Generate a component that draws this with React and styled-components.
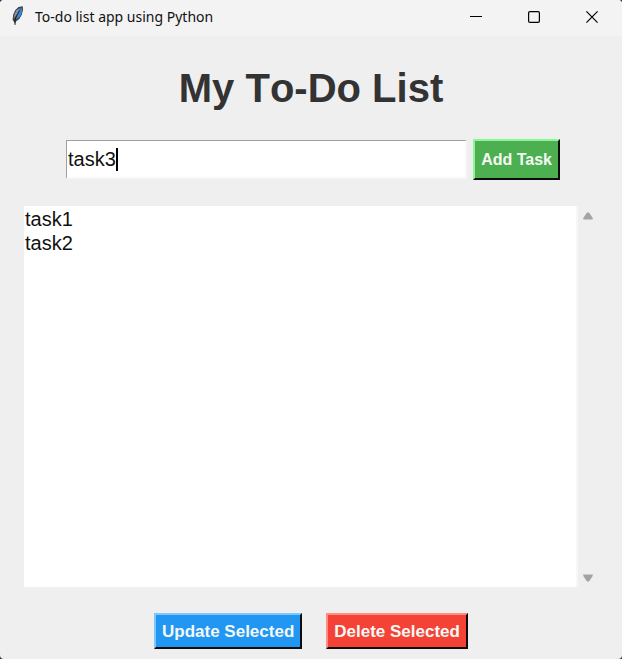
import React, { useState } from "react";
import styled, { createGlobalStyle } from "styled-components";

const GlobalStyle = createGlobalStyle`
  * { box-sizing: border-box; }
  body {
    margin: 0;
    background: #333;
    font-family: "Liberation Sans", Arial, sans-serif;
    font-kerning: none;
  }
`;

const Window = styled.div`
  min-height: 100vh;
  display: flex;
  flex-direction: column;
  background: #efefef;
  border-radius: 4px;
  overflow: hidden;
`;

const TitleBar = styled.header`
  height: 36px;
  display: flex;
  align-items: flex-start;
  background: #f3f3f3;
`;

const AppIcon = styled.svg`
  width: 14px;
  height: 20px;
  margin: 6px 10px 0 11px;
`;

const WindowTitle = styled.span`
  flex: 1;
  font: 14px/34px "Noto Sans", "Open Sans", sans-serif;
  color: #111;
`;

const WindowControls = styled.div`
  display: flex;
  margin-right: 1px;
`;

const WindowControl = styled.button`
  width: 58px;
  height: 34px;
  padding: 0;
  border: 0;
  background: transparent;
  display: flex;
  align-items: center;
  justify-content: center;
`;

const Content = styled.main`
  flex: 1;
  display: flex;
  flex-direction: column;
  padding: 28px 24px 10px;
`;

const Heading = styled.h1`
  margin: 0 0 27px;
  text-align: center;
  font-size: 40px;
  line-height: 48px;
  color: #333;
`;

const EntryRow = styled.form`
  display: flex;
  align-items: center;
  gap: 6px;
  margin: 0 38px 26px 42px;
`;

const EntryField = styled.div`
  position: relative;
  flex: 1;
  display: flex;
`;

const Entry = styled.input`
  flex: 1;
  min-width: 0;
  height: 39px;
  padding: 1px 1px 0;
  border-style: solid;
  border-color: #a0a0a0 #f7f7f7 #f7f7f7 #a0a0a0;
  border-width: 1px 2px 2px 1px;
  border-radius: 0;
  outline: 0;
  background: #fff;
  font: 20px "Liberation Sans", Arial, sans-serif;
  color: #111;
  caret-color: transparent;
`;

const Caret = styled.span`
  position: absolute;
  left: 50px;
  top: 8px;
  width: 2px;
  height: 23px;
  background: #000;
`;

const PushButton = styled.button`
  height: ${(p) => p.$height};
  padding: 1px 6px 0;
  border: 2px solid;
  border-color: ${(p) => p.$light} #0c0c0c #0c0c0c ${(p) => p.$light};
  border-radius: 0;
  background: ${(p) => p.$color};
  font: bold ${(p) => p.$size} "Liberation Sans", Arial, sans-serif;
  color: #f4f8f4;
  white-space: nowrap;
`;

const ListFrame = styled.div`
  flex: 1;
  display: flex;
`;

const TaskList = styled.select`
  appearance: none;
  flex: 1;
  padding: 2px 0 0;
  border: 0;
  border-right: 2px solid #f7f7f7;
  border-radius: 0;
  outline: 0;
  overflow: hidden;
  background: #fff;
  font: 20px "Liberation Sans", Arial, sans-serif;
  color: #111;

  option {
    padding: 0 1px;
    min-height: 24px;
    line-height: 24px;
  }
`;

const ScrollBar = styled.div`
  width: 20px;
  display: flex;
  flex-direction: column;
  justify-content: space-between;
  align-items: center;
  padding: 5px 0 4px;
`;

const ScrollArrow = styled.button`
  width: 10px;
  height: 10px;
  padding: 0;
  border: 0;
  background: transparent;
  display: flex;
  align-items: center;
`;

const Actions = styled.div`
  display: flex;
  justify-content: center;
  gap: 24px;
  margin-top: 26px;
`;

function Feather() {
  return (
    <AppIcon viewBox="0 0 14 20" aria-hidden="true">
      <path d="M4 18 2.8 15.5 1.6 14 2.2 8.5 4.3 4 7.5 1 11.8.3 12 4 10.8 8.8 8.3 13 5 15.5Z" fill="#3e4348" />
      <path d="M4.8 13.6 9 10.8 10.9 6.2 11.1 1.6 8 3.8 5.6 8.6Z" fill="#3c84cf" />
      <path d="M2.9 12.8 3.5 8 5.6 4.3 9 1.8 6.2 7.5Z" fill="#8398ad" />
      <path d="M8.6 4.5 6 9 4.1 13.8 4 19" fill="none" stroke="#15191d" strokeWidth=".9" />
    </AppIcon>
  );
}

export default function App() {
  const [task, setTask] = useState("task3");
  const [tasks, setTasks] = useState(["task1", "task2"]);
  const [selected, setSelected] = useState([]);

  const addTask = (event) => {
    event.preventDefault();
    if (!task.trim()) return;
    setTasks([...tasks, task]);
    setTask("");
  };

  const updateSelected = () =>
    setTasks(tasks.map((item, i) => (selected.includes(String(i)) ? task : item)));

  const deleteSelected = () => {
    setTasks(tasks.filter((_, i) => !selected.includes(String(i))));
    setSelected([]);
  };

  return (
    <>
      <GlobalStyle />
      <Window>
        <TitleBar>
          <Feather />
          <WindowTitle>To-do list app using Python</WindowTitle>
          <WindowControls>
            <WindowControl type="button" aria-label="Minimize">
              <svg width="12" height="12" viewBox="0 0 12 12">
                <path d="M0 5.5H12" stroke="#000" />
              </svg>
            </WindowControl>
            <WindowControl type="button" aria-label="Maximize">
              <svg width="12" height="12" viewBox="0 0 12 12">
                <rect x=".6" y=".6" width="10.8" height="10.8" rx="1.3" fill="none" stroke="#000" strokeWidth="1.2" />
              </svg>
            </WindowControl>
            <WindowControl type="button" aria-label="Close">
              <svg width="12" height="12" viewBox="0 0 12 12">
                <path d="M.4.4 11.6 11.6M11.6.4.4 11.6" stroke="#000" strokeWidth="1.2" />
              </svg>
            </WindowControl>
          </WindowControls>
        </TitleBar>
        <Content>
          <Heading>My To-Do List</Heading>
          <EntryRow onSubmit={addTask}>
            <EntryField>
              <Entry aria-label="Task" value={task} onChange={(e) => setTask(e.target.value)} />
              {task === "task3" && <Caret />}
            </EntryField>
            <PushButton type="submit" $height="41px" $size="16px" $color="#4caf50" $light="#90f594">
              Add Task
            </PushButton>
          </EntryRow>
          <ListFrame>
            <TaskList
              multiple
              size={2}
              aria-label="Tasks"
              value={selected}
              onChange={(e) => setSelected(Array.from(e.target.selectedOptions, (o) => o.value))}
            >
              {tasks.map((item, i) => (
                <option key={i} value={String(i)}>{item}</option>
              ))}
            </TaskList>
            <ScrollBar>
              <ScrollArrow type="button" aria-label="Scroll up">
                <svg width="10" height="8" viewBox="0 0 10 8">
                  <path d="M4 .5H6L9.7 6V7.5H.3V6Z" fill="#a3a3a3" />
                </svg>
              </ScrollArrow>
              <ScrollArrow type="button" aria-label="Scroll down">
                <svg width="10" height="8" viewBox="0 0 10 8">
                  <path d="M4 7.5H6L9.7 2V.5H.3V2Z" fill="#a3a3a3" />
                </svg>
              </ScrollArrow>
            </ScrollBar>
          </ListFrame>
          <Actions>
            <PushButton type="button" onClick={updateSelected} $height="36px" $size="17px" $color="#2196f3" $light="#7cc8fa">
              Update Selected
            </PushButton>
            <PushButton type="button" onClick={deleteSelected} $height="36px" $size="17px" $color="#f44336" $light="#ff8d84">
              Delete Selected
            </PushButton>
          </Actions>
        </Content>
      </Window>
    </>
  );
}
